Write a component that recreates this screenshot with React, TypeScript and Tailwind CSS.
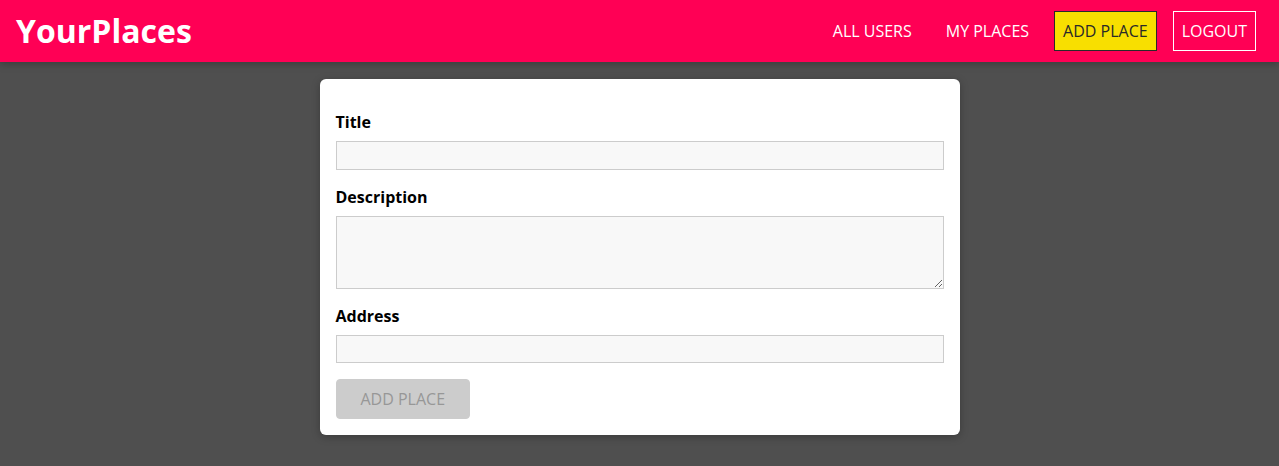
import React from "react";

export default function App() {
  return (
    <div
      className="min-h-[466px] bg-[#4f4f4f] text-black"
      style={{ fontFamily: '"Open Sans", sans-serif' }}
    >
      <header className="flex h-[62px] w-full items-center justify-between bg-[#ff0055] pl-4 pr-[15px] shadow-[0_2px_8px_rgba(0,0,0,0.26)]">
        <h1 className="text-[32px] font-bold leading-none text-white">YourPlaces</h1>
        <nav>
          <ul className="flex items-center">
            <li className="mx-2">
              <a className="block border border-transparent p-2 text-base leading-[22px] text-white">ALL USERS</a>
            </li>
            <li className="mx-2">
              <a className="block border border-transparent p-2 text-base leading-[22px] text-white">MY PLACES</a>
            </li>
            <li className="mx-2">
              <a className="block border border-[#292929] bg-[#f8df00] p-2 text-base leading-[22px] text-[#292929]">ADD PLACE</a>
            </li>
            <li className="mx-2">
              <button className="block border border-white bg-transparent p-2 text-base leading-[22px] text-white">LOGOUT</button>
            </li>
          </ul>
        </nav>
      </header>
      <main className="pt-[17px] pb-[31px]">
        <form className="mx-auto w-[90%] max-w-[640px] rounded-[6px] bg-white p-4 shadow-[0_2px_8px_rgba(0,0,0,0.26)]">
          <div className="my-4">
            <label className="mb-2 block text-base font-bold leading-[22px]">Title</label>
            <input
              type="text"
              className="block w-full border border-[#ccc] bg-[#f8f8f8] px-1 py-[2.4px] text-base leading-[22px] outline-none"
            />
          </div>
          <div className="my-4">
            <label className="mb-2 block text-base font-bold leading-[22px]">Description</label>
            <textarea
              rows={3}
              className="block w-full border border-[#ccc] bg-[#f8f8f8] px-1 py-[2.4px] text-base leading-[22px] outline-none"
            />
          </div>
          <div className="mt-4">
            <label className="mb-2 block text-base font-bold leading-[22px]">Address</label>
            <input
              type="text"
              className="block w-full border border-[#ccc] bg-[#f8f8f8] px-1 py-[2.4px] text-base leading-[22px] outline-none"
            />
          </div>
          <button
            type="button"
            disabled
            className="mt-4 rounded-[4px] border border-[#ccc] bg-[#ccc] px-6 py-2 text-base leading-[22px] text-[#979797]"
          >
            ADD PLACE
          </button>
        </form>
      </main>
    </div>
  );
}
